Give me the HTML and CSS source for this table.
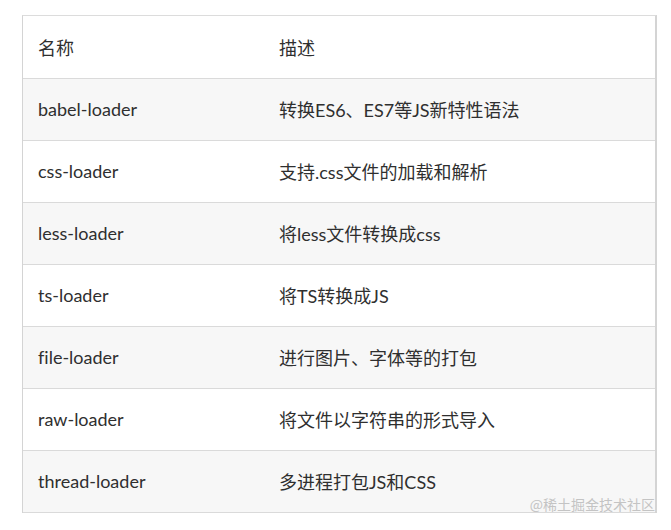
FILE: index.html
```html
<!DOCTYPE html>
<html lang="zh">
<head>
<meta charset="utf-8">
<title>loader</title>
<link rel="stylesheet" href="styles.css">
</head>
<body>
<div class="frame">
  <table class="tbl">
    <thead>
      <tr><th class="c1">名称</th><th>描述</th></tr>
    </thead>
    <tbody>
      <tr class="alt"><td class="c1">babel-loader</td><td>转换ES6、ES7等JS新特性语法</td></tr>
      <tr><td class="c1">css-loader</td><td>支持.css文件的加载和解析</td></tr>
      <tr class="alt"><td class="c1">less-loader</td><td>将less文件转换成css</td></tr>
      <tr><td class="c1">ts-loader</td><td>将TS转换成JS</td></tr>
      <tr class="alt"><td class="c1">file-loader</td><td>进行图片、字体等的打包</td></tr>
      <tr><td class="c1">raw-loader</td><td>将文件以字符串的形式导入</td></tr>
      <tr class="alt"><td class="c1">thread-loader</td><td>多进程打包JS和CSS</td></tr>
      <tr><td class="c1 stub"></td><td class="stub"></td></tr>
    </tbody>
  </table>
  <div class="mark">@稀土掘金技术社区</div>
</div>
</body>
</html>
```
FILE: styles.css
```css
html, body {
  margin: 0;
  padding: 0;
  background: #fff;
}
body {
  font-family: "Lato", "Noto Sans CJK SC", sans-serif;
  color: #2f2f2f;
  font-variant-ligatures: none;
}
.frame {
  position: relative;
  width: 635px;
  height: 498px;
  margin: 15px 0 0 22px;
  overflow: hidden;
  border-left: 1px solid #d4d4d4;
  border-right: 2px solid #d4d4d4;
  border-top: 1px solid #dcdcdc;
  box-sizing: border-box;
}
.tbl {
  width: 100%;
  border-collapse: collapse;
  font-size: 18px;
}
.tbl th, .tbl td {
  height: 62px;
  padding: 0 15px;
  text-align: left;
  font-weight: normal;
  border-bottom: 1px solid #dadada;
  vertical-align: middle;
  box-sizing: border-box;
}
.tbl .c1 {
  width: 241px;
}
.tbl tr.alt td {
  background: #f7f7f7;
}
.mark {
  position: absolute;
  right: 0;
  bottom: 1px;
  font-family: "Noto Sans CJK SC", sans-serif;
  font-size: 14px;
  color: #c4c4c4;
  line-height: 16px;
}
```
